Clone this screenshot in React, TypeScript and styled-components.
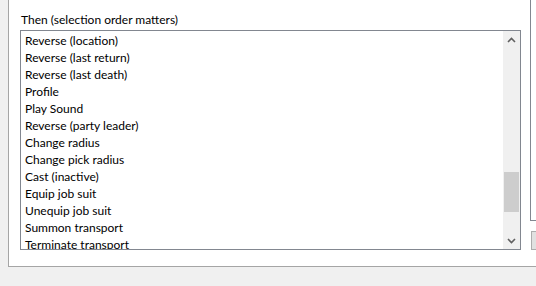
import React from 'react';
import styled, { createGlobalStyle } from 'styled-components';

const GlobalStyle = createGlobalStyle`
  html, body {
    margin: 0;
    padding: 0;
    background: #f0f0f0;
    overflow: hidden;
  }
  body {
    font-family: Lato, "Liberation Sans", Arial, sans-serif;
    font-size: 12px;
    color: #000;
  }
`;

const Screen = styled.div`
  width: 536px;
  height: 286px;
  overflow: hidden;
  background: #f0f0f0;
`;

const Panel = styled.div`
  display: flex;
  margin-left: 8px;
  width: 600px;
  height: 266px;
  background: #fff;
  border-left: 1px solid #a5a5a5;
  border-bottom: 1px solid #a5a5a5;
`;

const LeftColumn = styled.div`
  display: flex;
  flex-direction: column;
  padding: 11px 0 0 11px;
`;

const Label = styled.div`
  height: 17px;
  line-height: 17px;
  padding-left: 1px;
  margin-bottom: 2px;
`;

const ListBox = styled.div`
  display: flex;
  width: 499px;
  height: 218px;
  border: 1px solid #828790;
  background: #fff;
`;

const Items = styled.ul`
  flex: 1;
  list-style: none;
  margin: 0;
  padding: 1px 0 0;
  overflow: hidden;
`;

const Item = styled.li`
  height: 17px;
  line-height: 17px;
  padding-left: 4px;
  white-space: nowrap;
`;

const ScrollBar = styled.div`
  display: flex;
  flex-direction: column;
  width: 17px;
  background: #f0f0f0;
`;

const ArrowButton = styled.div`
  display: flex;
  align-items: center;
  justify-content: center;
  height: 17px;
  color: #606060;
`;

const Track = styled.div<{ $before: number }>`
  flex: 1;
  padding-top: ${(p) => p.$before}px;
`;

const Thumb = styled.div<{ $size: number }>`
  width: 15px;
  height: ${(p) => p.$size}px;
  margin-left: 1px;
  background: #cdcdcd;
`;

const RightColumn = styled.div`
  display: flex;
  flex-direction: column;
  margin-left: 9px;
`;

const GroupBox = styled.div`
  width: 80px;
  height: 220px;
  border-left: 1px solid #828790;
  border-bottom: 1px solid #828790;
`;

const Button = styled.div`
  width: 80px;
  height: 17px;
  margin: 10px 0 0 1px;
  background: #e1e1e1;
  border: 1px solid #adadad;
`;

const Chevron = ({ up }: { up?: boolean }) => (
  <svg width="9" height="6" viewBox="0 0 9 6">
    <path
      d={up ? 'M1 5 L4.5 1.5 L8 5' : 'M1 1 L4.5 4.5 L8 1'}
      fill="none"
      stroke="currentColor"
      strokeWidth="1.6"
    />
  </svg>
);

const actions = [
  'Reverse (location)',
  'Reverse (last return)',
  'Reverse (last death)',
  'Profile',
  'Play Sound',
  'Reverse (party leader)',
  'Change radius',
  'Change pick radius',
  'Cast (inactive)',
  'Equip job suit',
  'Unequip job suit',
  'Summon transport',
  'Terminate transport',
];

export default function App() {
  return (
    <Screen>
      <GlobalStyle />
      <Panel>
        <LeftColumn>
          <Label>Then (selection order matters)</Label>
          <ListBox>
            <Items>
              {actions.map((a) => (
                <Item key={a}>{a}</Item>
              ))}
            </Items>
            <ScrollBar>
              <ArrowButton>
                <Chevron up />
              </ArrowButton>
              <Track $before={124}>
                <Thumb $size={40} />
              </Track>
              <ArrowButton>
                <Chevron />
              </ArrowButton>
            </ScrollBar>
          </ListBox>
        </LeftColumn>
        <RightColumn>
          <GroupBox />
          <Button />
        </RightColumn>
      </Panel>
    </Screen>
  );
}
